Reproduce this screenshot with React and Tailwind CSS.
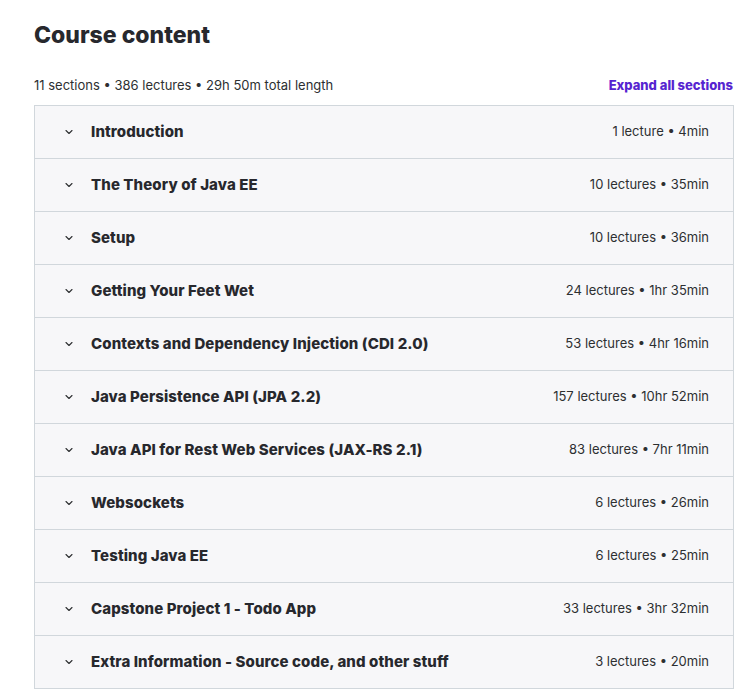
import React from "react";

const sections = [
  ["Introduction", "1 lecture • 4min"],
  ["The Theory of Java EE", "10 lectures • 35min"],
  ["Setup", "10 lectures • 36min"],
  ["Getting Your Feet Wet", "24 lectures • 1hr 35min"],
  ["Contexts and Dependency Injection (CDI 2.0)", "53 lectures • 4hr 16min"],
  ["Java Persistence API (JPA 2.2)", "157 lectures • 10hr 52min"],
  ["Java API for Rest Web Services (JAX-RS 2.1)", "83 lectures • 7hr 11min"],
  ["Websockets", "6 lectures • 26min"],
  ["Testing Java EE", "6 lectures • 25min"],
  ["Capstone Project 1 - Todo App", "33 lectures • 3hr 32min"],
  ["Extra Information - Source code, and other stuff", "3 lectures • 20min"],
];

function Chevron() {
  return (
    <svg width="12" height="12" viewBox="0 0 24 24" fill="none" stroke="#2d2f31" strokeWidth="2.2" strokeLinecap="round" strokeLinejoin="round">
      <path d="M6 9l6 6 6-6" />
    </svg>
  );
}

export default function App() {
  return (
    <div className="bg-white w-[751px] h-[700px] pl-[34px] pr-[18px] pt-[19px] text-[#2d2f31]" style={{ fontFamily: "Inter, 'Noto Sans', sans-serif" }}>
      <h2 className="text-[23px] leading-[32px] font-extrabold text-[#27282d]">Course content</h2>
      <div className="flex items-center justify-between mt-[25px] h-[20px]">
        <span className="text-[13px] text-[#2d2f31]">11 sections • 386 lectures • 29h 50m total length</span>
        <span className="text-[13px] font-extrabold text-[#5624d0]">Expand all sections</span>
      </div>
      <div className="mt-[9px] w-[700px] border border-[#d1d7dc]">
        {sections.map(([t, m], i) => (
          <div key={i} className={`flex items-center bg-[#f7f7f9] pl-[28px] pr-[24px] ${i > 0 ? "h-[53px] border-t border-[#d1d7dc]" : "h-[52px]"}`}>
            <Chevron />
            <span className="ml-[16px] text-[15px] tracking-[0.1px] font-extrabold flex-1 text-[#27282d]">{t}</span>
            <span className="text-[13px]">{m}</span>
          </div>
        ))}
      </div>
    </div>
  );
}
